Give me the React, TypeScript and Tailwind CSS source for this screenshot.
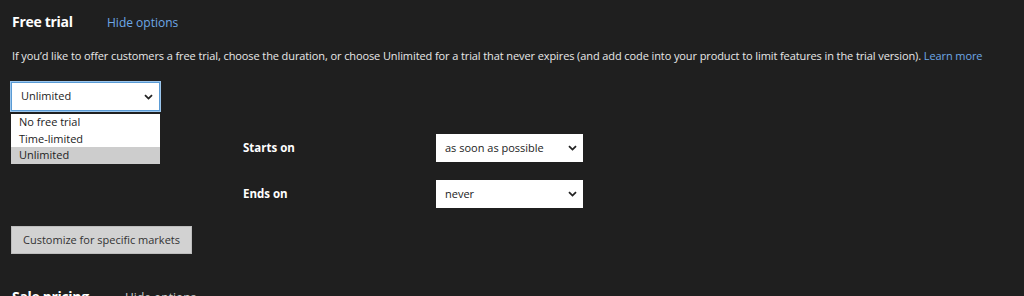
import React from 'react';

const Chevron: React.FC = () => (
  <svg width="9" height="6" viewBox="0 0 9 6" className="shrink-0">
    <path d="M1 1.2 L4.5 4.6 L8 1.2" fill="none" stroke="#222" strokeWidth="1.8" />
  </svg>
);

const FakeSelect: React.FC<{ value: string; width: string; focused?: boolean }> = ({ value, width, focused }) => (
  <div
    className={`${width} h-[28px] bg-white flex items-center justify-between pl-[9px] pr-[6px] text-[11px] text-[#222] ${
      focused ? 'h-[29px] border border-[#5a9bd5] shadow-[0_0_0_1px_#9cc6ec]' : ''
    }`}
  >
    <span>{value}</span>
    <Chevron />
  </div>
);

export default function App() {
  return (
    <div className="w-[1024px] h-[296px] overflow-hidden bg-[#1f1f1f] text-[#e8e8e8] font-['Open_Sans','Noto_Sans',sans-serif]">
      <div className="pl-[12px] pt-[11px]">
        {/* Header */}
        <div className="flex items-baseline h-[22px]">
          <h2 className="text-[14px] font-bold tracking-[-0.3px] text-white w-[95px]">Free trial</h2>
          <a className="text-[12px] text-[#6ea8e6]">Hide options</a>
        </div>

        <p className="mt-[15px] text-[11px] leading-[16px] tracking-[-0.1px] whitespace-nowrap">
          If you’d like to offer customers a free trial, choose the duration, or choose Unlimited for a trial that never
          expires (and add code into your product to limit features in the trial version).{' '}
          <a className="text-[#6ea8e6]">Learn more</a>
        </p>

        {/* Trial select with open list */}
        <div className="relative mt-[18px] ml-[-1px] w-[149px]">
          <FakeSelect value="Unlimited" width="w-[149px]" focused />
          <ul className="absolute left-0 top-[32px] w-[149px] bg-white text-[11px] text-[#222] leading-[16.5px] z-10">
            <li className="pl-[8px]">No free trial</li>
            <li className="pl-[8px]">Time-limited</li>
            <li className="pl-[8px] bg-[#cdcdcd]">Unlimited</li>
          </ul>
        </div>

        {/* Availability rows */}
        <div className="pl-[231px] mt-[23px] flex flex-col gap-[18px]">
          <div className="flex items-center">
            <span className="w-[193px] text-[11.5px] font-bold text-white">Starts on</span>
            <FakeSelect value="as soon as possible" width="w-[147px]" />
          </div>
          <div className="flex items-center">
            <span className="w-[193px] text-[11.5px] font-bold text-white">Ends on</span>
            <FakeSelect value="never" width="w-[147px]" />
          </div>
        </div>

        <button className="mt-[18px] ml-[-1px] h-[28px] w-[181px] bg-[#d2d2d2] text-[11px] text-[#333] border border-[#bdbdbd]">
          Customize for specific markets
        </button>

        <div className="mt-[32px] flex items-baseline">
          <h2 className="text-[14px] font-bold tracking-[-0.3px] text-white w-[113px]">Sale pricing</h2>
          <a className="text-[12px] text-[#cfcfcf]">Hide options</a>
        </div>
      </div>
    </div>
  );
}
